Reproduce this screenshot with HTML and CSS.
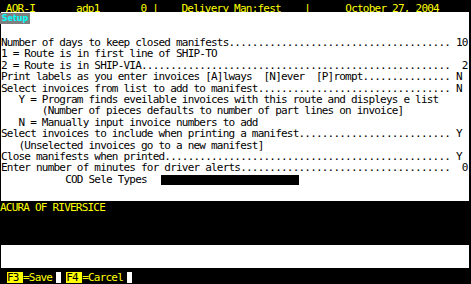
FILE: index.html
```html
<!DOCTYPE html>
<html lang="en">
<head>
    <meta charset="UTF-8">
    <title>Delivery Manifest Setup</title>
    <link rel="stylesheet" href="styles.css">
</head>
<body>
    <div class="screen">
        <pre class="titlebar"> AOR-I       adp1       0 |    Delivery Man:fest    |      October 27, 2004</pre>
        <section class="panel form-panel">
            <div class="tag">Setup</div>
<pre class="form">Number of days to keep closed manifests...................................... 10
1 = Route is in first line of SHIP-TO
2 = Route is in SHIP-VIA.....................................................  2
Print labels as you enter invoices [A]lways  [N]ever  [P]rompt............... N
Select invoices from list to add to manifest................................. N
   Y = Program finds eveilable invoices with this route and displeys e list
       (Number of pieces defaults to number of part lines on invoice]
   N = Manually input invoice numbers to add
Select invoices to include when printing a manifest.......................... Y
   (Unselected invoices go to a new manifest]
Close manifests when printed................................................. Y
Enter number of minutes for driver alerts....................................  0
           COD Sele Types  <span class="field"></span></pre>
        </section>
        <pre class="note">ACURA OF RIVERSICE</pre>
        <section class="panel blank-panel"></section>
        <div class="keys">
            <span class="key">F3</span><span class="label">=Save</span><span class="mark"></span>
            <span class="key">F4</span><span class="label">=Carcel</span><span class="mark"></span>
        </div>
    </div>
</body>
</html>
```

FILE: styles.css
```css
body {
    margin: 0;
    padding: 0;
    background-color: #ffffff;
}
pre {
    margin: 0;
}
.screen {
    width: 471px;
    height: 284px;
    overflow: hidden;
    display: flex;
    flex-direction: column;
    background-color: #000;
    font-family: "DejaVu Sans Mono", monospace;
    font-size: 11px;
    letter-spacing: -0.79px;
}
.titlebar {
    height: 12px;
    box-sizing: border-box;
    padding-top: 2px;
    line-height: 10px;
    color: #ffff00;
    background-color: #000;
    font: inherit;
    letter-spacing: -0.77px;
}
.panel {
    background-color: #fff;
    border-left: 1px solid #000;
    border-right: 2px solid #000;
}
.form-panel {
    height: 189px;
    box-sizing: border-box;
    padding-top: 1px;
}
.tag {
    width: 30px;
    height: 11px;
    margin-left: -1px;
    background-color: #7f7f7f;
    color: #00ffff;
    font-family: "DejaVu Sans", sans-serif;
    font-size: 8px;
    font-weight: bold;
    letter-spacing: 0;
    line-height: 11px;
    text-align: center;
}
.form {
    margin-top: 13px;
    font: inherit;
    line-height: 11.4px;
    color: #000;
}
.field {
    display: inline-block;
    width: 138px;
    height: 10px;
    margin-left: 3px;
    vertical-align: -2px;
    background-color: #000;
}
.note {
    height: 44px;
    box-sizing: border-box;
    line-height: 11.4px;
    color: #ffff00;
    background-color: #000;
    font: inherit;
}
.blank-panel {
    height: 23px;
}
.keys {
    height: 16px;
    box-sizing: border-box;
    padding: 4px 0 0 7px;
    display: flex;
    align-items: flex-start;
    color: #ffff00;
    background-color: #000;
}
.key {
    width: 16px;
    height: 11px;
    line-height: 11px;
    background-color: #ffff00;
    color: #000;
}
.label {
    line-height: 11px;
}
.mark {
    width: 5px;
    height: 11px;
    margin: 0 5px 0 4px;
    background-color: #fff;
}
```
